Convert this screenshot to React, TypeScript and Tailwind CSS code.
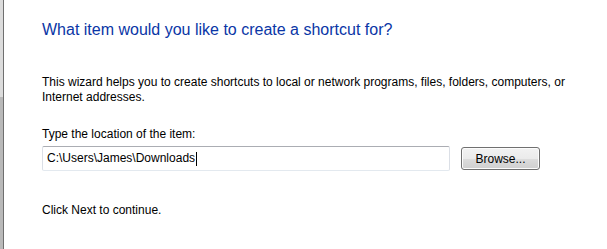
const HEADING = "What item would you like to create a shortcut for?";
const INTRO =
  "This wizard helps you to create shortcuts to local or network programs, files, folders, computers, or Internet addresses.";

function BrowseButton() {
  return (
    <button
      type="button"
      className="mt-px h-[23px] w-[79px] shrink-0 rounded-[3px] border border-[#707070] bg-[linear-gradient(to_bottom,#f2f2f2_0%,#ebebeb_50%,#dddddd_50%,#cfcfcf_100%)] text-[12px] leading-none text-black shadow-[inset_0_0_0_1px_#fcfcfc]"
    >
      Browse...
    </button>
  );
}

function LocationInput() {
  return (
    <div className="flex h-[25px] w-[408px] items-center rounded-[2px] border border-[#dbdfe6] border-t-[#abadb3] border-b-[#e3e9ef] px-[4px] text-[12px] leading-[15px] text-black">
      <span>C:\Users\James\Downloads</span>
      <span className="ml-px inline-block h-[14px] w-px bg-black" />
    </div>
  );
}

export default function App() {
  return (
    <div className="flex h-[249px] w-[607px] bg-white font-['Liberation_Sans',Arial,sans-serif]">
      <div className="flex w-[3px] flex-col">
        <div className="h-[97px] bg-[#dcdcdc]" />
        <div className="flex-1 bg-[#b9b9b9]" />
      </div>
      <div className="w-px bg-[#6f6f6f]" />

      <div className="flex flex-1 flex-col pl-[38px] pt-[20px]">
        <h1 className="text-[16px] leading-[20px] font-normal text-[#0a36a6]">{HEADING}</h1>

        <p className="mt-[35px] w-[530px] text-[12px] leading-[15px] text-black">{INTRO}</p>

        <label className="mt-[22px] text-[12px] leading-[15px] text-black">
          Type the location of the item:
        </label>
        <div className="mt-[4px] flex items-start gap-[11px]">
          <LocationInput />
          <BrowseButton />
        </div>

        <p className="mt-[32px] text-[12px] leading-[15px] text-black">Click Next to continue.</p>
      </div>
    </div>
  );
}
